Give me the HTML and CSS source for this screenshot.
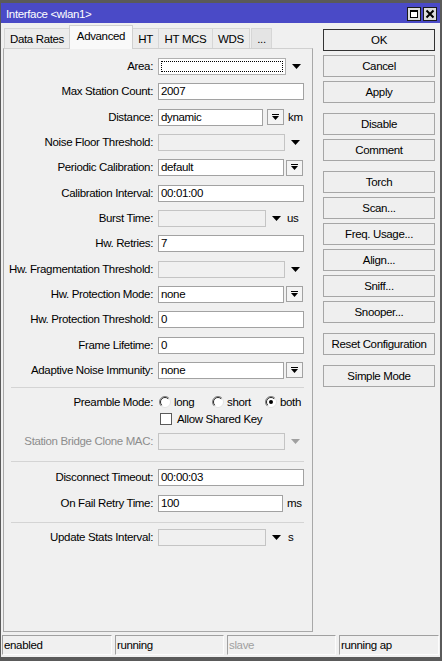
FILE: index.html
```html
<!DOCTYPE html>
<html>
<head>
<meta charset="utf-8">
<title>Interface</title>
<link rel="stylesheet" href="styles.css">
</head>
<body>
<div class="window">
  <div class="titlebar">
    <span class="title">Interface &lt;wlan1&gt;</span>
    <div class="tbtns">
      <svg class="tbtn" width="14" height="14" viewBox="0 0 14 14"><rect x="0.5" y="0.5" width="13" height="13" fill="#dcdcdc" stroke="#1a1a1a"/><rect x="3.5" y="3.5" width="7" height="7" fill="#fff" stroke="#000"/><rect x="3" y="3" width="8" height="2" fill="#000"/></svg>
      <svg class="tbtn" width="14" height="14" viewBox="0 0 14 14"><rect x="0.5" y="0.5" width="13" height="13" fill="#dcdcdc" stroke="#1a1a1a"/><path d="M3.5 3.5L10.5 10.5M10.5 3.5L3.5 10.5" stroke="#000" stroke-width="2"/></svg>
    </div>
  </div>
  <div class="client">
    <div class="leftcol">
      <div class="tabs">
        <span class="tab w-dr">Data Rates</span>
        <span class="tab active w-adv">Advanced</span>
        <span class="tab w-ht">HT</span>
        <span class="tab w-mcs">HT MCS</span>
        <span class="tab w-wds">WDS</span>
        <span class="tab w-more">...</span>
      </div>
      <div class="panel">
        <div class="row first">
          <span class="lbl">Area:</span>
          <div class="ctl"><div class="field w-area focus"><span class="dots"></span></div><svg class="arrow" width="9" height="5" viewBox="0 0 9 5"><path d="M0 0H9L4.5 5Z"/></svg></div>
        </div>
        <div class="row">
          <span class="lbl">Max Station Count:</span>
          <div class="ctl"><div class="field w-full">2007</div></div>
        </div>
        <div class="row">
          <span class="lbl">Distance:</span>
          <div class="ctl"><div class="field w-dist">dynamic</div><span class="dbtn dbtn-dist"><svg width="7" height="7" viewBox="0 0 7 7"><rect width="7" height="1"/><path d="M0 2H7L3.5 6Z"/></svg></span><span class="unit u-km">km</span></div>
        </div>
        <div class="row">
          <span class="lbl">Noise Floor Threshold:</span>
          <div class="ctl"><div class="field dis w-arr"></div><svg class="arrow" width="9" height="5" viewBox="0 0 9 5"><path d="M0 0H9L4.5 5Z"/></svg></div>
        </div>
        <div class="row">
          <span class="lbl">Periodic Calibration:</span>
          <div class="ctl"><div class="field w-btn">default</div><span class="dbtn"><svg width="7" height="7" viewBox="0 0 7 7"><rect width="7" height="1"/><path d="M0 2H7L3.5 6Z"/></svg></span></div>
        </div>
        <div class="row">
          <span class="lbl">Calibration Interval:</span>
          <div class="ctl"><div class="field w-full">00:01:00</div></div>
        </div>
        <div class="row">
          <span class="lbl">Burst Time:</span>
          <div class="ctl"><div class="field dis w-short"></div><svg class="arrow" width="9" height="5" viewBox="0 0 9 5"><path d="M0 0H9L4.5 5Z"/></svg><span class="unit u-short">us</span></div>
        </div>
        <div class="row">
          <span class="lbl">Hw. Retries:</span>
          <div class="ctl"><div class="field w-full">7</div></div>
        </div>
        <div class="row">
          <span class="lbl">Hw. Fragmentation Threshold:</span>
          <div class="ctl"><div class="field dis w-arr"></div><svg class="arrow" width="9" height="5" viewBox="0 0 9 5"><path d="M0 0H9L4.5 5Z"/></svg></div>
        </div>
        <div class="row">
          <span class="lbl">Hw. Protection Mode:</span>
          <div class="ctl"><div class="field w-btn">none</div><span class="dbtn"><svg width="7" height="7" viewBox="0 0 7 7"><rect width="7" height="1"/><path d="M0 2H7L3.5 6Z"/></svg></span></div>
        </div>
        <div class="row">
          <span class="lbl">Hw. Protection Threshold:</span>
          <div class="ctl"><div class="field w-full">0</div></div>
        </div>
        <div class="row">
          <span class="lbl">Frame Lifetime:</span>
          <div class="ctl"><div class="field w-full">0</div></div>
        </div>
        <div class="row">
          <span class="lbl">Adaptive Noise Immunity:</span>
          <div class="ctl"><div class="field w-btn">none</div><span class="dbtn"><svg width="7" height="7" viewBox="0 0 7 7"><rect width="7" height="1"/><path d="M0 2H7L3.5 6Z"/></svg></span></div>
        </div>

        <div class="sep sep1"></div>

        <div class="row solo">
          <span class="lbl">Preamble Mode:</span>
          <div class="ctl radios">
            <span class="radio"><svg width="12" height="12" viewBox="0 0 12 12"><circle cx="6" cy="6" r="5.5" fill="#fff" stroke="#e2e2e2"/><path d="M2.1 9.9A5.5 5.5 0 0 1 9.9 2.1" fill="none" stroke="#808080"/><path d="M2.8 9.2A4.5 4.5 0 0 1 9.2 2.8" fill="none" stroke="#2a2a2a"/></svg>long</span>
            <span class="radio"><svg width="12" height="12" viewBox="0 0 12 12"><circle cx="6" cy="6" r="5.5" fill="#fff" stroke="#e2e2e2"/><path d="M2.1 9.9A5.5 5.5 0 0 1 9.9 2.1" fill="none" stroke="#808080"/><path d="M2.8 9.2A4.5 4.5 0 0 1 9.2 2.8" fill="none" stroke="#2a2a2a"/></svg>short</span>
            <span class="radio"><svg width="12" height="12" viewBox="0 0 12 12"><circle cx="6" cy="6" r="5.5" fill="#fff" stroke="#e2e2e2"/><path d="M2.1 9.9A5.5 5.5 0 0 1 9.9 2.1" fill="none" stroke="#808080"/><path d="M2.8 9.2A4.5 4.5 0 0 1 9.2 2.8" fill="none" stroke="#2a2a2a"/><circle cx="6" cy="6" r="2" fill="#000"/></svg>both</span>
          </div>
        </div>
        <div class="row solo">
          <span class="lbl"></span>
          <div class="ctl"><span class="check"><span class="box"></span>Allow Shared Key</span></div>
        </div>
        <div class="row solo bridge">
          <span class="lbl disabled">Station Bridge Clone MAC:</span>
          <div class="ctl"><div class="field dis w-arr"></div><svg class="arrow grey" width="9" height="5" viewBox="0 0 9 5"><path d="M0 0H9L4.5 5Z"/></svg></div>
        </div>

        <div class="sep sep2"></div>

        <div class="row solo">
          <span class="lbl">Disconnect Timeout:</span>
          <div class="ctl"><div class="field w-full">00:00:03</div></div>
        </div>
        <div class="row onfail">
          <span class="lbl">On Fail Retry Time:</span>
          <div class="ctl"><div class="field w-fail">100</div><span class="unit u-ms">ms</span></div>
        </div>

        <div class="sep sep3"></div>

        <div class="row solo">
          <span class="lbl">Update Stats Interval:</span>
          <div class="ctl"><div class="field dis w-short"></div><svg class="arrow" width="9" height="5" viewBox="0 0 9 5"><path d="M0 0H9L4.5 5Z"/></svg><span class="unit u-s">s</span></div>
        </div>
      </div>
    </div>
    <div class="rightcol">
      <div class="grp">
        <div class="btn default">OK</div>
        <div class="btn">Cancel</div>
        <div class="btn">Apply</div>
      </div>
      <div class="grp">
        <div class="btn">Disable</div>
        <div class="btn">Comment</div>
      </div>
      <div class="grp">
        <div class="btn">Torch</div>
        <div class="btn">Scan...</div>
        <div class="btn">Freq. Usage...</div>
        <div class="btn">Align...</div>
        <div class="btn">Sniff...</div>
        <div class="btn">Snooper...</div>
      </div>
      <div class="grp">
        <div class="btn">Reset Configuration</div>
      </div>
      <div class="grp">
        <div class="btn">Simple Mode</div>
      </div>
    </div>
  </div>
  <div class="status">
    <div class="cell c1">enabled</div>
    <div class="cell c2">running</div>
    <div class="cell c3 grey">slave</div>
    <div class="cell c4">running ap</div>
  </div>
</div>
</body>
</html>
```
FILE: styles.css
```css
* { box-sizing: border-box; margin: 0; padding: 0; }
html, body { width: 442px; height: 661px; overflow: hidden; }
body {
  font-family: "Liberation Sans", Arial, sans-serif;
  font-size: 11.5px;
  letter-spacing: -0.35px;
  color: #000;
  background: #f0f0f0;
}
.window {
  width: 442px;
  height: 661px;
  border-style: solid;
  border-color: #5a5a5a;
  border-width: 3px 2px 4px 1px;
  background: #f0f0f0;
  display: flex;
  flex-direction: column;
}
.titlebar {
  height: 20px;
  flex: none;
  background: #4a4ac7;
  color: #fff;
  display: flex;
  align-items: center;
  justify-content: space-between;
  padding: 0 3px 0 5px;
}
.title { line-height: 20px; padding-top: 2px; white-space: nowrap; }
.tbtns { display: flex; gap: 2px; align-self: flex-end; margin-bottom: 2px; }
.tbtn { display: block; }

.client { height: 609px; flex: none; display: flex; }
.leftcol { width: 312px; padding-left: 2px; display: flex; flex-direction: column; }
.tabs { height: 25px; display: flex; align-items: flex-end; padding-left: 1px; }
.tab {
  height: 20px;
  border: 1px solid #d6d6d6;
  border-bottom: none;
  background: #ececec;
  text-align: center;
  line-height: 20px;
  margin-right: -1px;
  white-space: nowrap;
}
.tab.active {
  height: 24px;
  background: #f9f9f9;
  line-height: 20px;
  margin-bottom: -1px;
  position: relative;
  z-index: 1;
  border-color: #d0d0d0;
}
.w-dr { width: 66px; }
.w-adv { width: 64px; }
.w-ht { width: 27px; }
.w-mcs { width: 55px; }
.w-wds { width: 38px; margin-right: 1px; }
.w-more { width: 21px; background: #e4e4e4; }

.panel {
  width: 310px;
  height: 584px;
  border: 1px solid #a8a8a8;
  border-top-color: #d0d0d0;
  padding-top: 9px;
}
.row {
  height: 17px;
  display: grid;
  grid-template-columns: 149px auto;
  column-gap: 5px;
  align-items: center;
}
.row + .row { margin-top: 8.33px; }
.row.solo { margin-top: 0; }
.row.bridge { margin-top: 5px; }
.row.onfail { margin-top: 9px; }
.lbl { text-align: right; white-space: nowrap; line-height: 17px; }
.lbl.disabled { color: #8d8d8d; }
.ctl { display: flex; align-items: center; height: 17px; }

.field {
  height: 17px;
  border: 1px solid #a2a2a2;
  background: #fff;
  padding-left: 2px;
  line-height: 15px;
  white-space: nowrap;
}
.field.dis { background: #f0f0f0; border-color: #c4c4c4; }
.field.focus { padding: 2px; border-color: #b0b0b0; }
.dots { display: block; height: 11px; border: 1px dotted #000; }
.w-full { width: 146px; }
.w-btn { width: 126px; }
.w-area { width: 128px; }
.w-arr { width: 127px; }
.w-short { width: 108px; }
.w-dist { width: 105px; }
.w-fail { width: 125px; }

.arrow { display: block; margin-left: 6px; fill: #000; }
.arrow.grey { fill: #a0a0a0; }
.dbtn {
  width: 17px;
  height: 16px;
  margin-left: 2px;
  border: 1px solid #a2a2a2;
  background: #f4f4f4;
  display: flex;
  align-items: center;
  justify-content: center;
}
.dbtn svg { display: block; fill: #000; }
.dbtn-dist { margin-left: 4px; }
.unit { margin-left: 4px; line-height: 17px; }
.u-short { margin-left: 6px; }
.u-s { margin-left: 7px; }

.sep { height: 1px; background: #d4d4d4; margin-left: 7px; margin-right: 8px; }
.sep1 { margin-top: 8px; margin-bottom: 6px; }
.sep2 { margin-top: 11px; margin-bottom: 7px; }
.sep3 { margin-top: 10px; margin-bottom: 6px; }

.radios { display: grid; grid-template-columns: 53px 53px auto; padding-left: 1px; }
.radio { display: flex; align-items: center; gap: 3px; white-space: nowrap; }
.radio svg { display: block; flex: none; }
.check { display: flex; align-items: center; gap: 5px; padding-left: 2px; white-space: nowrap; }
.box { width: 12px; height: 12px; border: 1px solid #5a5a5a; background: #fff; }

.rightcol { width: 112px; margin-left: 10px; padding-top: 6px; }
.grp + .grp { margin-top: 10px; }
.btn {
  height: 22px;
  border: 1px solid #a6a6a6;
  background: #efefef;
  text-align: center;
  line-height: 20px;
  white-space: nowrap;
}
.btn + .btn { margin-top: 4px; }
.btn.default { border-color: #333; }

.status { height: 20px; margin-top: 3px; display: flex; padding-left: 1px; flex: none; }
.cell {
  height: 20px;
  border-top: 1px solid #a0a0a0;
  border-left: 1px solid #a0a0a0;
  border-right: 1px solid #fcfcfc;
  border-bottom: 1px solid #fcfcfc;
  padding-left: 1px;
  line-height: 18px;
  white-space: nowrap;
}
.c1 { width: 110px; }
.c2 { width: 109px; margin-left: 3px; }
.c3 { width: 109px; margin-left: 3px; }
.c4 { width: 100px; margin-left: 3px; }
.grey { color: #a0a0a0; }
```
